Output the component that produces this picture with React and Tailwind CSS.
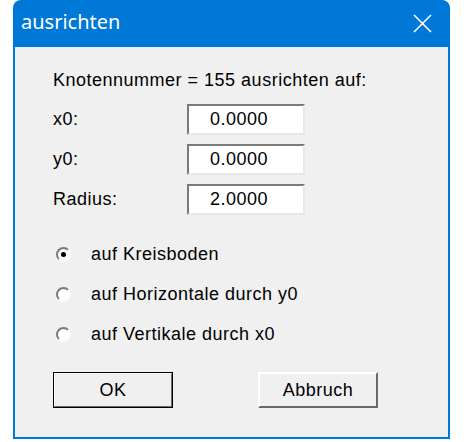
import React from "react";

const fields = [
  { label: "x0:", value: "0.0000" },
  { label: "y0:", value: "0.0000" },
  { label: "Radius:", value: "2.0000" },
];

const options = [
  { label: "auf Kreisboden", checked: true },
  { label: "auf Horizontale durch y0", checked: false },
  { label: "auf Vertikale durch x0", checked: false },
];

function Radio({ checked }) {
  return (
    <span className="relative block w-[15px] h-[15px] rounded-full bg-white border-2 border-t-[#7a7a7a] border-l-[#7a7a7a] border-b-[#fafafa] border-r-[#fafafa]">
      {checked && (
        <span className="absolute left-1/2 top-1/2 w-[5px] h-[5px] -ml-[2.5px] -mt-[2.5px] rounded-full bg-black" />
      )}
    </span>
  );
}

export default function App() {
  return (
    <div className="w-[466px] h-[442px] bg-white font-['Liberation_Sans',Arial,sans-serif] text-black">
      <div className="ml-[13px] w-[437px] h-[439px] rounded-t-[8px] bg-[#0078d7] flex flex-col">
        {/* title bar */}
        <div className="h-[46px] flex items-center justify-between pl-[8px] pr-[18px]">
          <span className="text-white text-[20px] font-['Noto_Sans',sans-serif] leading-none pb-[2px]">
            ausrichten
          </span>
          <svg width="19" height="19" viewBox="0 0 19 19" fill="none" stroke="white" strokeWidth="1.6">
            <path d="M1 1L18 18M18 1L1 18" />
          </svg>
        </div>

        <div className="flex-1 mx-[2px] mb-[2px] mt-[1px] bg-[#f0f0f0] pl-[38px] pt-[23px] text-[18px] tracking-[0.5px]">
          <div className="leading-[20px]">Knotennummer = 155 ausrichten auf:</div>

          <div className="mt-[14px] flex flex-col gap-[9px]">
            {fields.map((f) => (
              <div key={f.label} className="flex items-center h-[31px]">
                <span className="w-[134px]">{f.label}</span>
                <div className="w-[118px] h-[31px] bg-white border-2 border-t-[#7a7a7a] border-l-[#7a7a7a] border-b-[#e8e8e8] border-r-[#e8e8e8] pl-[21px] flex items-center">
                  {f.value}
                </div>
              </div>
            ))}
          </div>

          <div className="mt-[29px] flex flex-col gap-[20px]">
            {options.map((o) => (
              <div key={o.label} className="flex items-center h-[20px]">
                <span className="ml-[3px] mr-[20px]">
                  <Radio checked={o.checked} />
                </span>
                <span>{o.label}</span>
              </div>
            ))}
          </div>

          <div className="mt-[28px] flex gap-[85px]">
            <button className="w-[120px] h-[36px] border border-black bg-[#f0f0f0] flex items-center justify-center">
              <span className="w-full h-full flex items-center justify-center border border-t-white border-l-white border-b-[#696969] border-r-[#696969]">
                OK
              </span>
            </button>
            <button className="w-[120px] h-[36px] bg-[#f0f0f0] border-2 border-t-white border-l-white border-b-[#696969] border-r-[#696969] flex items-center justify-center">
              Abbruch
            </button>
          </div>
        </div>
      </div>
    </div>
  );
}
